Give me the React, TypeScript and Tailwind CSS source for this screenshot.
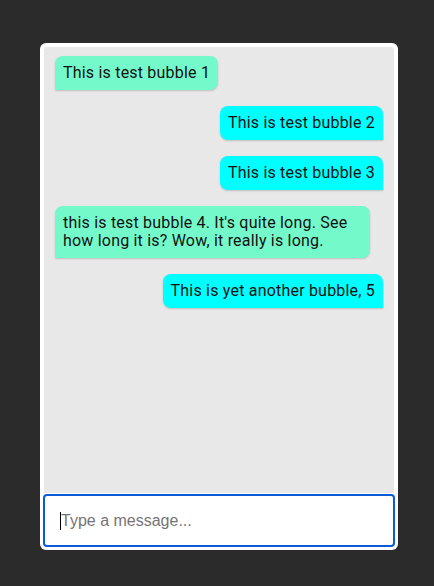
import React from "react";

interface Message {
  text: string;
  mine: boolean;
}

const messages: Message[] = [
  { text: "This is test bubble 1", mine: false },
  { text: "This is test bubble 2", mine: true },
  { text: "This is test bubble 3", mine: true },
  { text: "this is test bubble 4. It's quite long. See how long it is? Wow, it really is long.", mine: false },
  { text: "This is yet another bubble, 5", mine: true },
];

const Bubble: React.FC<{ msg: Message }> = ({ msg }) => (
  <div
    className={`max-w-[90%] mx-[11px] px-2 py-[8px] text-[16px] leading-[18px] tracking-[0.2px] text-[#111] shadow-[0_1px_2px_rgba(0,0,0,0.18)] rounded-lg
    ${msg.mine ? "self-end bg-[#00ffff] rounded-br-none" : "self-start bg-[#74f9cb] rounded-bl-none"}`}
  >
    {msg.text}
  </div>
);

export default function App() {
  return (
    <div className="min-h-[586px] w-full bg-[#2b2b2b] pl-[40px] pt-[43px]">
      <div className="w-[358px] h-[507px] bg-white rounded-md p-[3px] flex flex-col">
        {/* Message list */}
        <div
          className="flex-1 mx-[1px] mt-[1px] bg-[#e8e8e8] rounded-t-[3px] pt-[9px] flex flex-col gap-4"
          style={{ fontFamily: "Roboto, 'Noto Sans', sans-serif" }}
        >
          {messages.map((m, i) => (
            <Bubble key={i} msg={m} />
          ))}
        </div>

        {/* Input */}
        <div className="h-[53px] mt-[1px] border-2 border-[#0a5bd6] rounded-[4px] bg-white flex items-center pl-[15px]">
          <span className="w-px h-[18px] bg-black"></span>
          <span
            className="text-[16px] text-[#757575]"
            style={{ fontFamily: "'Liberation Sans', Arial, sans-serif" }}
          >
            Type a message...
          </span>
        </div>
      </div>
    </div>
  );
}
